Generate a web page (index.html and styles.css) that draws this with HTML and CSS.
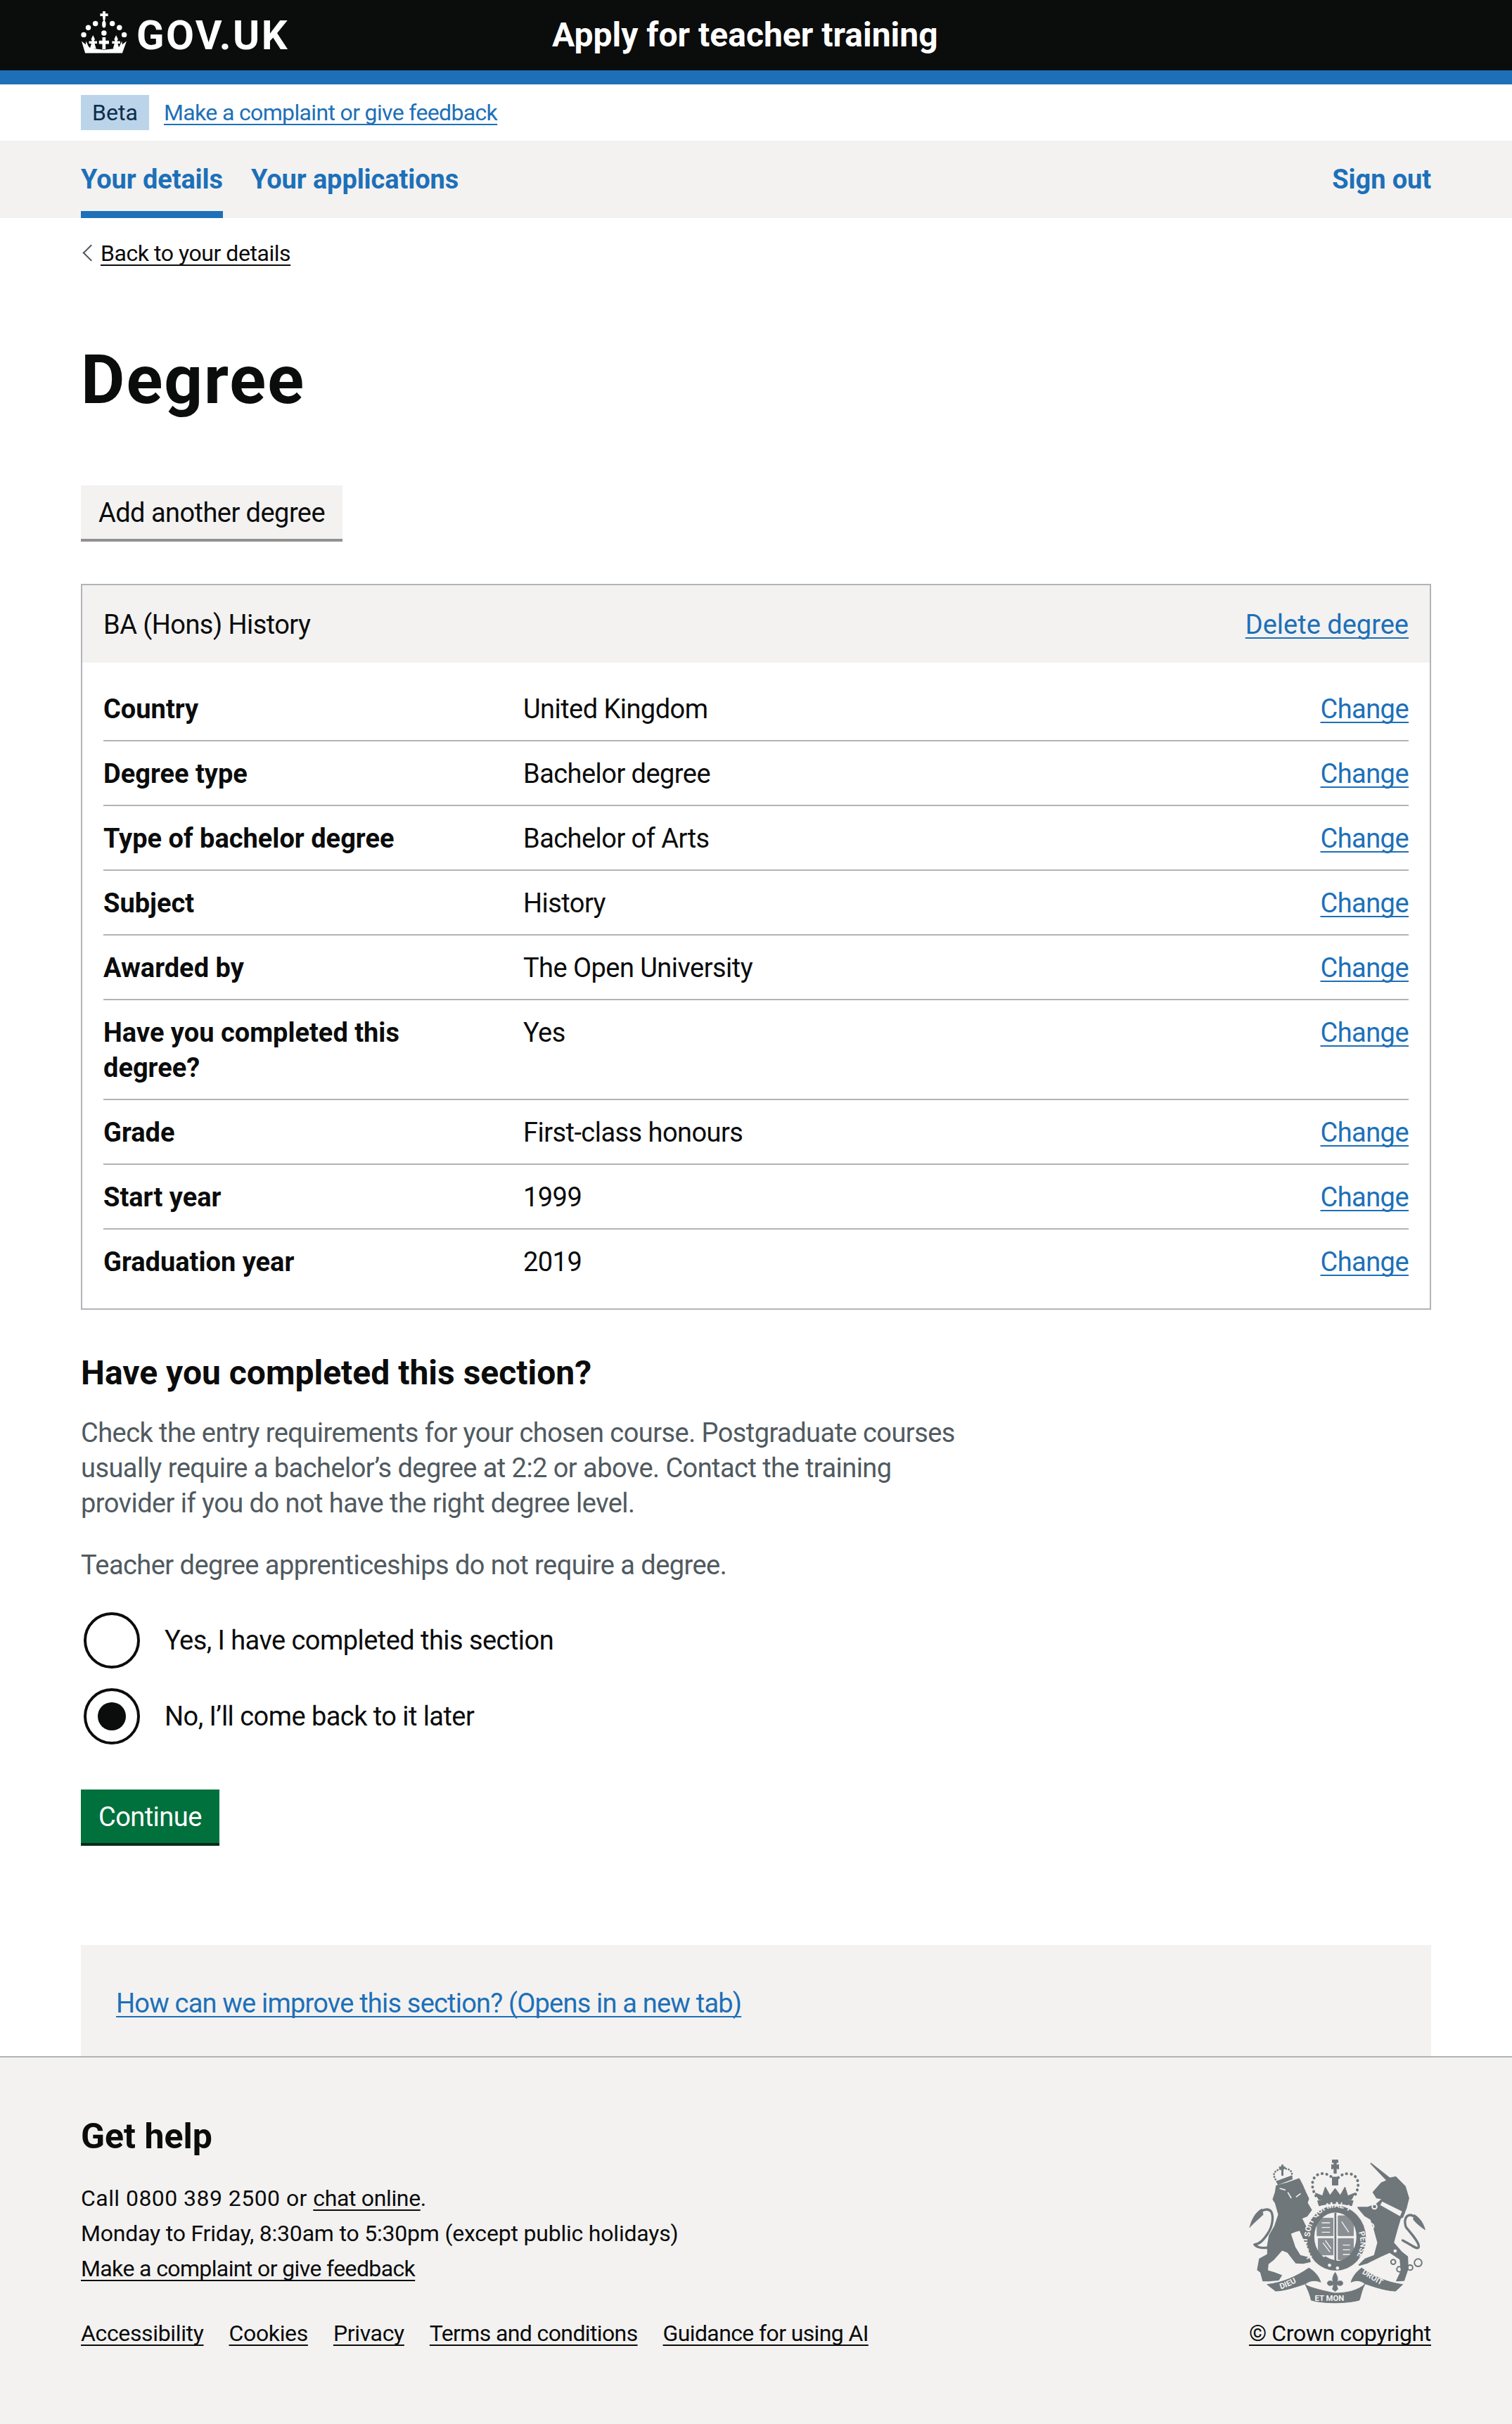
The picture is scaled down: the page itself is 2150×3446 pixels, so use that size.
FILE: index.html
```html
<!DOCTYPE html>
<html lang="en">
<head>
<meta charset="utf-8">
<title>Degree - Apply for teacher training</title>
<link rel="stylesheet" href="styles.css">
</head>
<body>
<header class="site-header">
  <div class="wrap header-inner">
    <a class="logo" href="#">
      <svg class="crown" viewBox="44 40 195 182" aria-hidden="true">
        <g fill="#fff">
          <path d="M136 42h11v10h11v11h-11v9l-3 13h-5l-3-13v-9h-11v-11h11z"/>
          <ellipse cx="141" cy="97" rx="8" ry="15"/>
          <circle cx="105" cy="94" r="11"/><circle cx="176" cy="94" r="11"/>
          <circle cx="75" cy="111" r="11"/><circle cx="206" cy="111" r="11"/>
          <circle cx="56" cy="141" r="11"/><circle cx="226" cy="141" r="11"/>
          <circle cx="141" cy="134" r="11"/>
          <path d="M47 168L64 182L66 168L76 190L85 198L141 204L197 198L206 190L216 168L218 182L236 168L218 218H62Z"/>
          <path d="M95 143L103 160L99 168H112V178H102L108 200H82L88 178H78V168H91L87 160Z"/>
          <path d="M192 143L200 160L196 168H209V178H199L205 200H179L185 178H175V168H188L184 160Z"/>
          <path d="M134 152h14v14h14v14h-14v22h-14v-22h-14v-14h14z"/>
        </g>
      </svg>
      <span class="logo-text">GOV.UK</span>
    </a>
    <a class="service-name" href="#">Apply for teacher training</a>
  </div>
</header>

<div class="wrap phase">
  <strong class="tag">Beta</strong>
  <a class="link small" href="#">Make a complaint or give feedback</a>
</div>

<nav class="nav">
  <div class="wrap nav-inner">
    <a class="nav-link current" href="#">Your details</a>
    <a class="nav-link" href="#">Your applications</a>
    <a class="nav-link signout" href="#">Sign out</a>
  </div>
</nav>

<div class="wrap">
  <a class="back" href="#"><span class="back-text">Back to your details</span></a>
  <main>
    <h1 class="title">Degree</h1>
    <a class="button secondary" href="#">Add another degree</a>

    <section class="card">
      <div class="card-head">
        <span>BA (Hons) History</span>
        <a class="link delete" href="#">Delete degree</a>
      </div>
      <dl class="summary">
        <div class="row"><dt>Country</dt><dd>United Kingdom</dd><dd class="act"><a class="link" href="#">Change</a></dd></div>
        <div class="row"><dt>Degree type</dt><dd>Bachelor degree</dd><dd class="act"><a class="link" href="#">Change</a></dd></div>
        <div class="row"><dt>Type of bachelor degree</dt><dd>Bachelor of Arts</dd><dd class="act"><a class="link" href="#">Change</a></dd></div>
        <div class="row"><dt>Subject</dt><dd>History</dd><dd class="act"><a class="link" href="#">Change</a></dd></div>
        <div class="row"><dt>Awarded by</dt><dd>The Open University</dd><dd class="act"><a class="link" href="#">Change</a></dd></div>
        <div class="row"><dt>Have you completed this degree?</dt><dd>Yes</dd><dd class="act"><a class="link" href="#">Change</a></dd></div>
        <div class="row"><dt>Grade</dt><dd>First-class honours</dd><dd class="act"><a class="link" href="#">Change</a></dd></div>
        <div class="row"><dt>Start year</dt><dd>1999</dd><dd class="act"><a class="link" href="#">Change</a></dd></div>
        <div class="row last"><dt>Graduation year</dt><dd>2019</dd><dd class="act"><a class="link" href="#">Change</a></dd></div>
      </dl>
    </section>

    <h2 class="heading">Have you completed this section?</h2>
    <p class="hint first">Check the entry requirements for your chosen course. Postgraduate courses usually require a bachelor’s degree at 2:2 or above. Contact the training provider if you do not have the right degree level.</p>
    <p class="hint second">Teacher degree apprenticeships do not require a degree.</p>

    <div class="radios">
      <label class="radio"><span class="radio-mark"></span><span>Yes, I have completed this section</span></label>
      <label class="radio"><span class="radio-mark checked"></span><span>No, I’ll come back to it later</span></label>
    </div>

    <a class="button primary" href="#">Continue</a>

    <div class="feedback"><a class="link feedback-link" href="#">How can we improve this section? (Opens in a new tab)</a></div>
  </main>
</div>

<footer class="footer">
  <div class="wrap footer-grid">
    <div class="footer-left">
      <h2 class="heading footer-heading">Get help</h2>
      <p class="footer-line"><span class="phone">Call 0800 389 2500 or </span><a class="flink" href="#">chat online</a>.</p>
      <p class="footer-line hours">Monday to Friday, 8:30am to 5:30pm (except public holidays)</p>
      <p class="footer-line"><a class="flink tight" href="#">Make a complaint or give feedback</a></p>
      <ul class="meta">
        <li><a class="flink" href="#">Accessibility</a></li>
        <li><a class="flink" href="#">Cookies</a></li>
        <li><a class="flink" href="#">Privacy</a></li>
        <li><a class="flink tight" href="#">Terms and conditions</a></li>
        <li><a class="flink tight" href="#">Guidance for using AI</a></li>
      </ul>
    </div>
    <div class="footer-right">
      <svg class="crest" viewBox="145 95 755 615" aria-hidden="true">
        <g fill="#6f777b" stroke="#6f777b" stroke-linejoin="round">
          <path stroke-width="6" d="M262 208L300 198L358 178L372 205L385 235L398 262L392 280L410 310L392 335L368 345L415 440L385 447L362 395L345 400L320 410L340 470L362 505L400 515L405 530L375 537L345 535L310 490L285 480L250 520L225 540L222 570L250 578L282 590L270 608L230 612L205 612L195 575L182 565L190 520L225 500L225 460L232 420L255 380L272 330L258 280L248 265L258 235Z"/>
          <path fill="none" stroke-width="10" stroke-linecap="round" d="M228 470C200 475 180 470 168 458C190 455 205 440 225 410C245 380 250 340 240 318C225 298 195 310 175 335"/>
          <path stroke-width="2" d="M200 305C170 320 155 355 147 385C165 365 185 350 205 330Z"/>
          <path fill="none" stroke-width="8" stroke-dasharray="1 11" stroke-linecap="round" d="M265 190C240 160 250 140 285 135C315 130 335 145 325 170"/>
          <path stroke-width="3" d="M262 188L325 165L330 178L268 202Z"/>
          <path stroke-width="3" d="M274 126h10v-8h6v8h8v7h-8v30h-6v-30h-10z"/>
          <path fill="none" stroke="#f3f2f1" stroke-width="5" d="M275 218L300 225M310 235L325 260M345 255L365 240"/>
          <path fill="none" stroke-width="12" stroke-dasharray="1 19" stroke-linecap="round" d="M430 250C405 210 410 160 455 155C490 155 505 175 512 195C520 175 535 155 570 155C615 160 620 210 595 250"/>
          <path stroke-width="3" d="M500 97h24v11h-7v12l10 -4v20l-10-4v22h-10v-22l-10 4v-20l10 4v-12h-7z"/>
          <path stroke-width="3" d="M500 170h24v34h-24z"/>
          <path stroke-width="3" d="M428 238l30 12 12-38 20 36 22-30 22 30 20-36 12 38 30-12-14 28H442z"/>
          <path stroke-width="4" d="M438 272C480 262 545 262 588 272L582 292C540 280 485 280 444 292Z"/>
          <ellipse cx="515" cy="430" rx="128" ry="138"/>
          <ellipse cx="513" cy="425" rx="90" ry="104" fill="#f3f2f1" stroke="none"/>
          <path stroke-width="3" d="M435 345h68v75h-68zM525 335h65v85h-65zM525 432h65v90h-65zM440 432h63v70h-63z" opacity=".8"/>
          <path fill="none" stroke="#f3f2f1" stroke-width="4" d="M455 365h35M455 385h35M455 405h35M545 460h30M545 480h30M545 500h30M460 450l30 40M470 440l25 35M540 360l30 45"/>
          <path fill="none" stroke-width="8" d="M513 322V530"/>
          <path stroke-width="4" d="M438 535L470 510C500 530 540 535 590 530L575 548C530 570 470 570 438 535Z"/>
          <circle cx="488" cy="546" r="7" fill="#f3f2f1" stroke="none"/><circle cx="522" cy="558" r="7" fill="#f3f2f1" stroke="none"/>
          <path stroke-width="6" d="M665 112L745 175L770 170L810 210L825 260L815 300L800 340L790 345L775 395L760 450L795 490L820 510L822 560L805 610L775 612L795 570L790 520L745 490L700 510L650 535L615 545L640 520L680 505L695 450L680 395L665 350L640 335L610 300L650 300L690 285L715 262L690 258L675 235L710 195L735 185Z"/>
          <path fill="none" stroke-width="10" stroke-linecap="round" d="M800 440C840 460 860 480 868 470C875 455 845 420 815 385C805 360 810 330 835 332C855 335 870 355 880 375"/>
          <path stroke-width="2" d="M850 330C875 345 890 370 896 395C875 380 860 370 845 350Z"/>
          <path fill="#f3f2f1" stroke-width="4" d="M702 290L712 272L800 315L790 340Z"/>
          <g fill="none" stroke-width="6">
            <circle cx="760" cy="532" r="10"/><circle cx="786" cy="563" r="11"/><circle cx="832" cy="556" r="11"/><circle cx="866" cy="535" r="16"/>
            <circle cx="680" cy="296" r="10" stroke="#f3f2f1"/><circle cx="666" cy="380" r="11" stroke="#f3f2f1"/><circle cx="800" cy="404" r="11" stroke="#f3f2f1"/>
          </g>
          <circle cx="768" cy="485" r="7" fill="#f3f2f1" stroke="none"/><circle cx="792" cy="450" r="8" fill="#f3f2f1" stroke="none"/>
          <path stroke-width="2" d="M512 576C525 595 525 610 520 618C530 608 548 612 545 625C540 638 525 632 518 628L524 648L512 658L500 648L506 628C499 632 484 638 479 625C476 612 494 608 504 618C499 610 499 595 512 576Z"/>
          <path stroke-width="3" d="M222 628C290 620 345 595 400 558C430 575 445 600 450 618C420 605 400 615 386 625C340 640 295 655 258 656Z"/>
          <path stroke-width="3" d="M385 628C400 640 460 655 510 665C560 665 610 655 640 625C625 650 622 680 615 695C560 710 460 710 410 695C405 670 395 650 385 628Z"/>
          <path stroke-width="3" d="M800 628C735 620 680 595 625 558C600 575 585 600 580 618C610 605 625 615 640 625C685 640 730 655 770 656Z"/>
        </g>
        <defs>
          <path id="garter-top" d="M405 425C405 350 460 300 515 300C575 300 625 350 630 430"/>
          <path id="garter-right" d="M612 405C630 450 620 510 570 535"/>
          <path id="garter-left" d="M415 510C395 480 390 450 395 430"/>
          <path id="r-left" d="M280 648C320 635 360 615 395 590"/>
          <path id="r-mid" d="M425 697H610"/>
          <path id="r-right" d="M625 580C670 610 710 635 750 648"/>
        </defs>
        <g class="crest-text">
          <text><textPath href="#garter-top">SOIT QUI MAL Y</textPath></text>
          <text><textPath href="#garter-right">PENSE</textPath></text>
          <text><textPath href="#garter-left">HONI</textPath></text>
          <text><textPath href="#r-left">DIEU</textPath></text>
          <text><textPath href="#r-mid">ET MON</textPath></text>
          <text><textPath href="#r-right">DROIT</textPath></text>
        </g>
      </svg>
      <a class="flink copyright" href="#">© Crown copyright</a>
    </div>
  </div>
</footer>
</body>
</html>
```
FILE: styles.css
```css
* { box-sizing: border-box; }
html, body { margin: 0; padding: 0; }
body {
  font-family: Roboto, "Noto Sans", "Liberation Sans", Arial, sans-serif;
  font-size: 38px;
  line-height: 50px;
  letter-spacing: -0.55px;
  color: #0b0c0c;
  background: #fff;
}
a { text-decoration: none; }
.wrap { width: 1920px; margin: 0 auto; }

.site-header { background: #0b0c0c; border-bottom: 20px solid #1d70b8; height: 120px; }
.header-inner { display: flex; align-items: center; height: 100px; }
.logo { display: flex; align-items: center; color: #fff; width: 670px; }
.crown { width: 66px; height: 62px; margin: 0 13px 8px 0; }
.logo-text { font-weight: 700; font-size: 58px; line-height: 100px; letter-spacing: 2.4px; }
.service-name { color: #fff; font-weight: 700; font-size: 48px; line-height: 100px; letter-spacing: 0; }

.phase { display: flex; align-items: center; gap: 21px; height: 80px; }
.tag { background: #bbd4ea; color: #0c2d4a; font-weight: 400; font-size: 32px; line-height: 50px; padding: 0 16px; width: 97px; letter-spacing: 0; }
.small { font-size: 32px; line-height: 40px; letter-spacing: -0.65px; }
.link { color: #1d70b8; text-decoration: underline; text-decoration-thickness: 2px; text-underline-offset: 5px; text-decoration-skip-ink: none; }
.delete { letter-spacing: 0; }
.feedback-link { letter-spacing: -0.8px; }

.nav { background: #f3f2f1; height: 110px; }
.nav-inner { display: flex; gap: 40px; height: 110px; }
.nav-link { color: #1d70b8; font-weight: 700; line-height: 110px; height: 110px; letter-spacing: -0.1px; }
.current { border-bottom: 10px solid #1d70b8; }
.signout { margin-left: auto; }

.back { display: block; height: 40px; margin-top: 30px; padding-left: 28px; position: relative; font-size: 32px; line-height: 40px; color: #0b0c0c; letter-spacing: -0.45px; }
.back::before { content: ""; position: absolute; left: 6px; top: 11px; width: 15px; height: 15px; border-left: 2px solid #505a5f; border-bottom: 2px solid #505a5f; transform: rotate(45deg); }
.back-text { text-decoration: underline; text-decoration-thickness: 2px; text-underline-offset: 5px; text-decoration-skip-ink: none; }

.title { font-size: 96px; line-height: 100px; font-weight: 700; margin: 110px 0 100px; letter-spacing: 2px; }

.button { display: inline-block; height: 80px; line-height: 78px; padding: 0 25px; }
.secondary { background: #f3f2f1; color: #0b0c0c; box-shadow: inset 0 -4px 0 #929191; }
.primary { background: #00703c; color: #fff; box-shadow: inset 0 -4px 0 #002d18; }

.card { border: 2px solid #b1b4b6; margin-top: 60px; }
.card-head { display: flex; justify-content: space-between; align-items: center; height: 110px; padding: 2px 30px 0; background: #f3f2f1; }
.summary { margin: 20px 0 0; padding: 0 30px 22px; }
.row { display: grid; grid-template-columns: 597px 1fr auto; padding: 21px 0 19px; border-bottom: 2px solid #b1b4b6; }
.row.last { border-bottom: 0; }
.row dt { font-weight: 700; width: 480px; letter-spacing: 0; }
.row dd { margin: 0; }

.heading { font-size: 48px; line-height: 60px; font-weight: 700; margin: 60px 0 30px; letter-spacing: 0; }
.hint { color: #505a5f; margin: 0; max-width: 1270px; }
.second { margin-top: 38px; }

.radios { display: flex; flex-direction: column; gap: 28px; margin-top: 42px; }
.radio { display: flex; align-items: center; gap: 35px; padding-left: 4px; height: 80px; }
.radio-mark { display: flex; align-items: center; justify-content: center; width: 80px; height: 80px; border: 4px solid #0b0c0c; border-radius: 50%; }
.checked::after { content: ""; width: 40px; height: 40px; background: #0b0c0c; border-radius: 50%; }

.primary { margin-top: 64px; }

.feedback { display: flex; align-items: center; height: 158px; margin-top: 141px; padding: 8px 50px 0; background: #f3f2f1; }

.footer { background: #f3f2f1; border-top: 2px solid #b1b4b6; padding: 82px 0 104px; font-size: 32px; letter-spacing: -0.35px; }
.footer-grid { display: flex; justify-content: space-between; align-items: stretch; }
.footer-heading { margin: 0 0 33px; font-size: 50px; }
.footer-line { margin: 0; line-height: 50px; }
.phone { letter-spacing: 0.45px; }
.hours { letter-spacing: -0.2px; }
.flink { color: #0b0c0c; text-decoration: underline; text-decoration-thickness: 2px; text-underline-offset: 5px; text-decoration-skip-ink: none; }
.tight { letter-spacing: -0.62px; }
.meta { display: flex; gap: 36px; list-style: none; margin: 42px 0 0; padding: 0; }
.footer-right { display: flex; flex-direction: column; align-items: flex-end; justify-content: flex-end; }
.crest { width: 252px; height: 205px; margin-right: 7px; margin-bottom: 17px; }
.crest-text { font-family: Roboto, sans-serif; font-weight: 700; font-size: 34px; fill: #f3f2f1; letter-spacing: 0; }
```
